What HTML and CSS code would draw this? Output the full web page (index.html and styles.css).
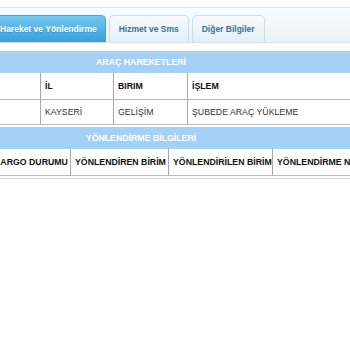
FILE: index.html
```html
<!DOCTYPE html>
<html lang="tr">
<head>
<meta charset="utf-8">
<title>Hareket ve Yönlendirme</title>
<link rel="stylesheet" href="styles.css">
</head>
<body>
<div class="page">
  <div class="tabs">
    <div class="tab active">Hareket ve Yönlendirme</div>
    <div class="tab">Hizmet ve Sms</div>
    <div class="tab">Diğer Bilgiler</div>
  </div>
  <div class="panel">
    <div class="band">ARAÇ HAREKETLERİ</div>
    <table class="grid moves">
      <colgroup><col class="m1"><col class="m2"><col class="m3"><col class="m4"></colgroup>
      <tr class="head"><th></th><th>İL</th><th>BIRIM</th><th>İŞLEM</th></tr>
      <tr class="data"><td></td><td>KAYSERİ</td><td>GELİŞİM</td><td>ŞUBEDE ARAÇ YÜKLEME</td></tr>
    </table>
    <div class="band band2">YÖNLENDİRME BİLGİLERİ</div>
    <table class="grid route">
      <colgroup><col class="r0"><col class="r1"><col class="r2"><col class="r3"><col class="r4"><col class="r5"></colgroup>
      <tr class="head"><th></th><th>KARGO DURUMU</th><th>YÖNLENDİREN BİRİM</th><th>YÖNLENDİRİLEN BİRİM</th><th>YÖNLENDİRME NO</th><th></th></tr>
    </table>
    <div class="rule"></div>
  </div>
</div>
</body>
</html>
```
FILE: styles.css
```css
html, body {
  margin: 0;
  padding: 0;
  overflow: hidden;
  background: #ffffff;
  font-family: "Liberation Sans", Arial, sans-serif;
}
.page {
  margin-left: -68px;
  width: 418px;
  padding-top: 7px;
}
.tabs {
  display: flex;
  align-items: flex-end;
  gap: 3px;
  height: 27px;
  padding: 7px 0 0 58px;
  border-top: 1px solid #dde1e5;
  border-bottom: 1px solid #d3e2ee;
  background: linear-gradient(#fbfdff, #e8f1f8);
}
.tab {
  height: 27px;
  box-sizing: border-box;
  padding: 0 9px;
  display: flex;
  align-items: center;
  font-size: 8.5px;
  font-weight: bold;
  color: #3f6f92;
  background: linear-gradient(#f7fbfe, #e4eef7);
  border: 1px solid #cddde9;
  border-bottom: none;
  border-radius: 5px 5px 0 0;
  white-space: nowrap;
}
.tab.active {
  padding-right: 8px;
  color: #ffffff;
  background: linear-gradient(#74c6ef, #379fdb);
  border-color: #45a3d8;
  text-shadow: 0 1px 0 rgba(0, 60, 110, 0.25);
}
.panel {
  padding-top: 8px;
}
.band {
  height: 22px;
  display: flex;
  align-items: center;
  justify-content: center;
  background: #a5d0f5;
  color: #ffffff;
  font-size: 8.75px;
  font-weight: bold;
}
.band2 {
  margin-top: 2px;
}
.grid {
  border-collapse: collapse;
  table-layout: fixed;
  font-size: 8.75px;
}
.moves { width: 418px; }
.route { width: 540px; }
.grid th, .grid td {
  text-align: left;
  padding: 0 4px;
  border-left: 1px solid #a9a9a9;
  border-bottom: 1px solid #b9b9b9;
  white-space: nowrap;
  overflow: hidden;
}
.grid th {
  color: #111111;
  font-weight: bold;
}
.grid td {
  color: #333333;
}
.grid .head th { height: 26px; }
.grid .data td { height: 24px; }
.m1 { width: 108px; }
.m2 { width: 73px; }
.m3 { width: 74px; }
.m4 { width: 163px; }
.r0 { width: 57px; }
.r1 { width: 81px; }
.r2 { width: 98px; }
.r3 { width: 104px; }
.r4 { width: 100px; }
.r5 { width: 100px; }
.rule {
  margin-top: 2px;
  height: 1px;
  background: #dddddd;
}
```
